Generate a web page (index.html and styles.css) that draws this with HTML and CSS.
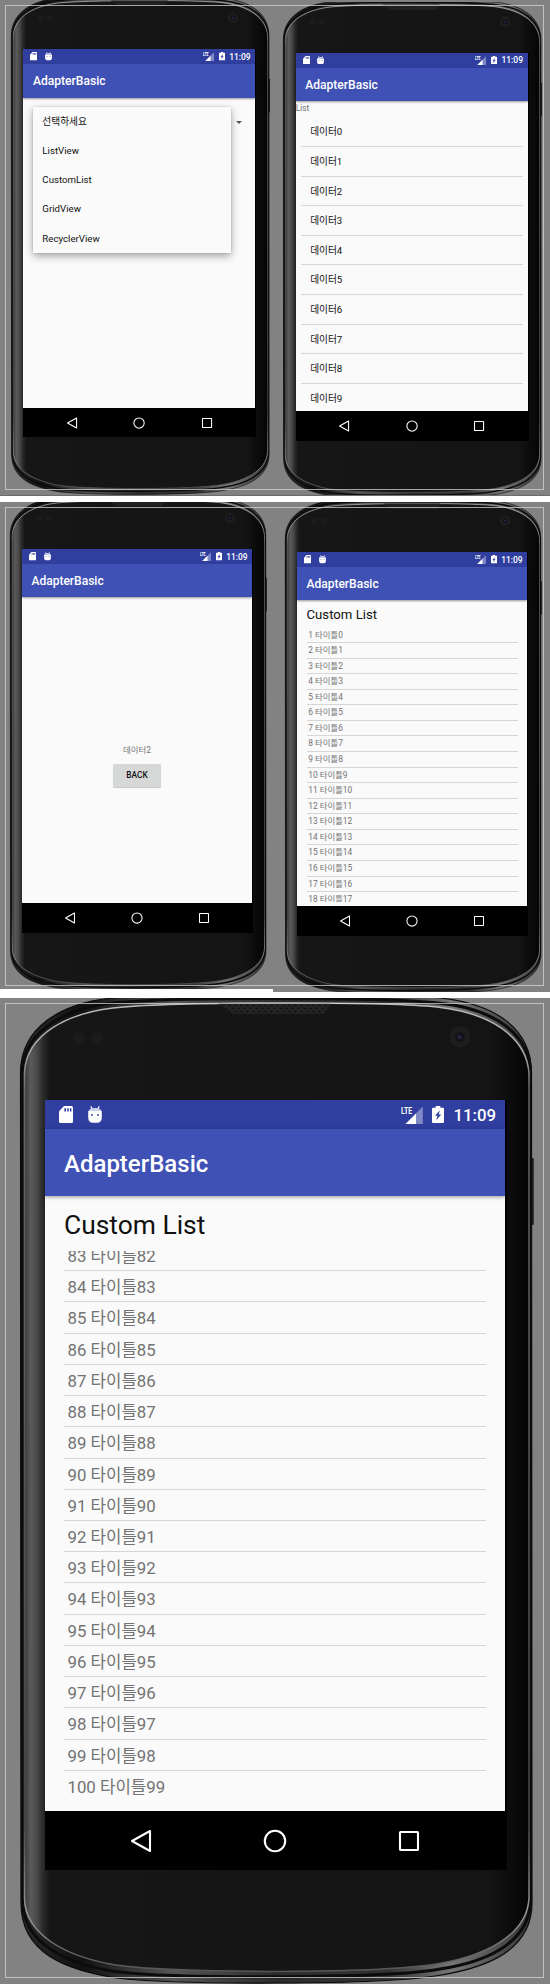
FILE: index.html
```html
<!DOCTYPE html>
<html lang="ko">
<head>
<meta charset="utf-8">
<title>AdapterBasic</title>
<link rel="stylesheet" href="styles.css">
</head>
<body>
<svg class="defs" width="0" height="0" aria-hidden="true">
  <defs>
    <linearGradient id="face" x1="0" x2="1" y1="0" y2="0">
      <stop offset="0" stop-color="#3a3a3a"/><stop offset=".012" stop-color="#5a5a5a"/><stop offset=".025" stop-color="#484848"/>
      <stop offset=".036" stop-color="#2c2c2c"/><stop offset=".05" stop-color="#161616"/><stop offset=".92" stop-color="#141414"/>
      <stop offset=".96" stop-color="#0c0c0c"/><stop offset="1" stop-color="#050505"/>
    </linearGradient>
    <linearGradient id="rim" x1="0" x2="1" y1="0" y2="0">
      <stop offset="0" stop-color="#2a2a2a"/><stop offset=".12" stop-color="#111"/><stop offset=".3" stop-color="#555"/>
      <stop offset=".5" stop-color="#2c2c2e"/><stop offset=".72" stop-color="#333"/><stop offset=".84" stop-color="#777"/><stop offset="1" stop-color="#333"/>
    </linearGradient>
    <linearGradient id="edge" x1="0" x2="0" y1="0" y2="1">
      <stop offset="0" stop-color="#bbb"/><stop offset=".05" stop-color="#aaa"/><stop offset=".09" stop-color="#666"/><stop offset=".85" stop-color="#48484c"/>
      <stop offset=".94" stop-color="#999"/><stop offset="1" stop-color="#555"/>
    </linearGradient>
    <pattern id="mesh" width="6" height="6" patternUnits="userSpaceOnUse">
      <rect width="6" height="6" fill="#242424"/><circle cx="1.5" cy="1.5" r="1.1" fill="#101010"/><circle cx="4.5" cy="4.5" r="1.1" fill="#101010"/>
    </pattern>
    <symbol id="device" viewBox="0 0 550 986">
      <rect x="531" y="160" width="2.800" height="67" rx="1" fill="#222"/>
      <path d="M20.500 75C20.500 30 60 5 113 0C170-6 380-6 440 0C495 6 531.500 30 531.500 75L532 905C532 958 475 972 435 978C380 987 175 987 117 980C65 972 21 955 21 905Z" fill="url(#rim)" stroke="#0b0b0b" stroke-width="1.200"/>
      <path d="M22 75C23 33 66 10 113 5C170-1 380-1 438 5C492 10 530 35 530.500 75V902C530 948 480 965 440 971C385 981 165 981 112 973C65 965 22.500 945 22.500 902Z" fill="none" stroke="#0c0c0c" stroke-width="3"/>
      <path d="M24.500 75C26 35 70 15 113 10C170 4 380 3 437 9C490 15 526 38 529 75V900C527 940 480 958 442 965C385 976 165 976 110 966C68 958 25 938 24.500 900Z" fill="url(#face)" stroke="url(#edge)" stroke-width="1.500"/>
      <path d="M217 5H331L325 16H233Z" fill="url(#mesh)"/>
      <circle cx="79" cy="40" r="6.500" fill="#1b1b1b"/><circle cx="97" cy="40" r="6.500" fill="#1b1b1b"/>
      <circle cx="460" cy="39" r="10.500" fill="#1d1d1e"/><circle cx="460" cy="39" r="5" fill="#131318"/><circle cx="459.500" cy="39" r="2" fill="#25254c"/>
    </symbol>
    <symbol id="sd" viewBox="0 0 14 17">
      <path d="M5 0H12.500Q14 0 14 1.500V15.500Q14 17 12.500 17H1.500Q0 17 0 15.500V5.300Z" fill="#fff"/>
      <path d="M5.400 2.200H7V5.500H5.400ZM8.200 2.200H9.700V5.500H8.200ZM10.900 2.200H12.400V5.500H10.900Z" fill="#303f9f"/>
    </symbol>
    <symbol id="droid" viewBox="0 0 14 17">
      <path d="M2.800.3 4.200 3M11.200.3 9.800 3" stroke="#fff" stroke-width="1.200" fill="none"/>
      <path d="M.5 5Q2 2 4.500 2H9.500Q12 2 13.500 5Z" fill="#c8cdee"/>
      <path d="M.2 5H13.800V11Q13.800 16.800 9 16.800H5Q.2 16.800 .2 11Z" fill="#fff"/>
      <circle cx="4" cy="9" r=".9" fill="#303f9f"/><circle cx="10" cy="9" r=".9" fill="#303f9f"/>
    </symbol>
    <symbol id="battery" viewBox="0 0 12 17">
      <path d="M3.700 0H8.300V1.700H11Q12 1.700 12 2.700V16Q12 17 11 17H1Q0 17 0 16V2.700Q0 1.700 1 1.700H3.700Z" fill="#fff"/>
      <path d="M7.800 4.200 3 9.800H5.500L4.200 14.300 9.200 8.500H6.800Z" fill="#303f9f"/>
    </symbol>
    <symbol id="signal" viewBox="0 0 22 18">
      <path d="M4.500 18 21.800 .5V18Z" fill="#7f89c6"/><path d="M4.500 18 15 7.500V18Z" fill="#fff"/>
      <path d="M0 0H12V8.500H0Z" fill="#303f9f"/>
      <text x="0" y="8" class="lte" textLength="11" lengthAdjust="spacingAndGlyphs">LTE</text>
    </symbol>
    <symbol id="back" viewBox="0 0 24 24"><path d="M21 2V22L3 12Z" fill="none" stroke="#fff" stroke-width="2.100" stroke-linejoin="round"/></symbol>
    <symbol id="home" viewBox="0 0 24 24"><circle cx="12" cy="12" r="10.200" fill="none" stroke="#fff" stroke-width="2.100"/></symbol>
    <symbol id="recent" viewBox="0 0 24 24"><rect x="3" y="3" width="18" height="18" rx=".5" fill="none" stroke="#fff" stroke-width="2.100"/></symbol>
  </defs>
</svg>

<main class="board">
  <section class="row row-a">
    <article class="phone p1">
      <svg class="device"><use href="#device"/></svg>
      <div class="screen">
        <div class="status"><svg class="sd"><use href="#sd"/></svg><svg class="droid"><use href="#droid"/></svg><svg class="signal"><use href="#signal"/></svg><svg class="battery"><use href="#battery"/></svg><span class="time">11:09</span></div>
        <header class="appbar">AdapterBasic</header>
        <div class="content spinner">
          <ul class="popup"><li>선택하세요</li><li>ListView</li><li>CustomList</li><li>GridView</li><li>RecyclerView</li></ul>
          <i class="arrow"></i>
        </div>
        <nav class="nav"><svg><use href="#back"/></svg><svg><use href="#home"/></svg><svg><use href="#recent"/></svg></nav>
      </div>
    </article>
    <article class="phone p2">
      <svg class="device"><use href="#device"/></svg>
      <div class="screen">
        <div class="status"><svg class="sd"><use href="#sd"/></svg><svg class="droid"><use href="#droid"/></svg><svg class="signal"><use href="#signal"/></svg><svg class="battery"><use href="#battery"/></svg><span class="time">11:09</span></div>
        <header class="appbar">AdapterBasic</header>
        <div class="content">
          <div class="caption">List</div>
          <ul class="data"><li>데이터0</li><li>데이터1</li><li>데이터2</li><li>데이터3</li><li>데이터4</li><li>데이터5</li><li>데이터6</li><li>데이터7</li><li>데이터8</li><li>데이터9</li></ul>
        </div>
        <nav class="nav"><svg><use href="#back"/></svg><svg><use href="#home"/></svg><svg><use href="#recent"/></svg></nav>
      </div>
    </article>
    <div class="frame"></div>
  </section>

  <section class="row row-b">
    <article class="phone p3">
      <svg class="device"><use href="#device"/></svg>
      <div class="screen">
        <div class="status"><svg class="sd"><use href="#sd"/></svg><svg class="droid"><use href="#droid"/></svg><svg class="signal"><use href="#signal"/></svg><svg class="battery"><use href="#battery"/></svg><span class="time">11:09</span></div>
        <header class="appbar">AdapterBasic</header>
        <div class="content detail">
          <div class="value">데이터2</div>
          <button class="btn">BACK</button>
        </div>
        <nav class="nav"><svg><use href="#back"/></svg><svg><use href="#home"/></svg><svg><use href="#recent"/></svg></nav>
      </div>
    </article>
    <article class="phone p4">
      <svg class="device"><use href="#device"/></svg>
      <div class="screen">
        <div class="status"><svg class="sd"><use href="#sd"/></svg><svg class="droid"><use href="#droid"/></svg><svg class="signal"><use href="#signal"/></svg><svg class="battery"><use href="#battery"/></svg><span class="time">11:09</span></div>
        <header class="appbar">AdapterBasic</header>
        <div class="content custom">
          <h2>Custom List</h2>
          <ul class="titles"><li>1 타이틀0</li><li>2 타이틀1</li><li>3 타이틀2</li><li>4 타이틀3</li><li>5 타이틀4</li><li>6 타이틀5</li><li>7 타이틀6</li><li>8 타이틀7</li><li>9 타이틀8</li><li>10 타이틀9</li><li>11 타이틀10</li><li>12 타이틀11</li><li>13 타이틀12</li><li>14 타이틀13</li><li>15 타이틀14</li><li>16 타이틀15</li><li>17 타이틀16</li><li>18 타이틀17</li></ul>
        </div>
        <nav class="nav"><svg><use href="#back"/></svg><svg><use href="#home"/></svg><svg><use href="#recent"/></svg></nav>
      </div>
    </article>
    <div class="frame"></div>
  </section>

  <section class="row row-c">
    <article class="phone p5">
      <svg class="device"><use href="#device"/></svg>
      <div class="screen">
        <div class="status"><svg class="sd"><use href="#sd"/></svg><svg class="droid"><use href="#droid"/></svg><svg class="signal"><use href="#signal"/></svg><svg class="battery"><use href="#battery"/></svg><span class="time">11:09</span></div>
        <header class="appbar">AdapterBasic</header>
        <div class="content custom">
          <h2>Custom List</h2>
          <ul class="titles scrolled"><li>83 타이틀82</li><li>84 타이틀83</li><li>85 타이틀84</li><li>86 타이틀85</li><li>87 타이틀86</li><li>88 타이틀87</li><li>89 타이틀88</li><li>90 타이틀89</li><li>91 타이틀90</li><li>92 타이틀91</li><li>93 타이틀92</li><li>94 타이틀93</li><li>95 타이틀94</li><li>96 타이틀95</li><li>97 타이틀96</li><li>98 타이틀97</li><li>99 타이틀98</li><li>100 타이틀99</li></ul>
        </div>
        <nav class="nav"><svg><use href="#back"/></svg><svg><use href="#home"/></svg><svg><use href="#recent"/></svg></nav>
      </div>
    </article>
    <div class="frame"></div>
  </section>
</main>
</body>
</html>
```
FILE: styles.css
```css
* { box-sizing: border-box; }
body { margin: 0; background: #fff; font-family: Roboto, "Noto Sans CJK KR", sans-serif; }
ul { list-style: none; margin: 0; padding: 0; }
.defs { display: block; position: absolute; }
.board { width: 550px; height: 1984px; display: flex; flex-direction: column; }

.row { position: relative; display: grid; grid-template-columns: 273px 277px; align-items: start; overflow: hidden; background: #828282; flex: none; }
.row-a { height: 496px; margin-bottom: 6px; border-bottom: 1px solid #6c6c6c; }
.row-b { height: 490px; margin-bottom: 6px; clip-path: polygon(0 0, 100% 0, 100% 100%, 273px 100%, 273px 487px, 0 487px); }
.row-c { height: 986px; grid-template-columns: 550px; }
.frame { position: absolute; left: 5px; top: 5px; width: 539px; height: 485px; border: 1px solid rgba(215, 215, 215, .75); }
.row-b .frame { height: 479px; }
.row-c .frame { height: 975px; }

/* --u is one unit of the full-size handset */
.phone { --u: .504px; position: relative; width: calc(550 * var(--u)); padding: calc(102 * var(--u)) 0 0 calc(45 * var(--u)); height: calc(986 * var(--u)); }
.device { position: absolute; left: 0; top: 0; width: 100%; height: 100%; overflow: visible; }
.p1 { margin: -2px 0 0 .7px; }
.p2 { margin: 1.500px 0 0 0; }
.p3 { --u: .5px; margin: -4px 0 0 -.5px; }
.p4 { --u: .5px; margin: -1px 0 0 1.500px; }
.p5 { --u: 1px; }

.screen { position: relative; width: calc(462 * var(--u)); height: calc(770 * var(--u)); display: flex; flex-direction: column; background: #000; }
.row-b .screen { height: calc(767 * var(--u)); }
.status { width: calc(460 * var(--u)); height: calc(29 * var(--u)); background: #303f9f; display: flex; align-items: center; padding: 0 calc(9 * var(--u)) 0 calc(14 * var(--u)); flex: none; }
.status svg { height: calc(17 * var(--u)); flex: none; }
.sd, .droid { width: calc(14 * var(--u)); }
.droid { margin-left: calc(15 * var(--u)); }
.status .signal { width: calc(22 * var(--u)); height: calc(18 * var(--u)); margin-left: auto; }
.battery { width: calc(12 * var(--u)); margin: 0 calc(9 * var(--u)); }
.lte { font: 700 9px Roboto, sans-serif; fill: #fff; }
.time { color: #fff; font-size: calc(16.800 * var(--u)); font-weight: 500; line-height: 1; white-space: nowrap; padding-top: calc(2 * var(--u)); }
.appbar { position: relative; z-index: 1; width: calc(460 * var(--u)); height: calc(67 * var(--u)); background: #3f51b5; color: #fff; font-size: calc(24 * var(--u)); font-weight: 500; line-height: calc(71 * var(--u)); padding-left: calc(19 * var(--u)); box-shadow: 0 1px calc(4 * var(--u)) rgba(0, 0, 0, .4); flex: none; }
.content { width: calc(460 * var(--u)); flex: 1; min-height: 0; background: #fafafa; overflow: hidden; }
.nav { height: calc(59 * var(--u)); padding-right: calc(2 * var(--u)); display: flex; align-items: center; justify-content: center; gap: calc(110 * var(--u)); flex: none; }
.nav svg { width: calc(24 * var(--u)); height: calc(24 * var(--u)); }

.spinner { display: flex; align-items: flex-start; padding: 9px 0 0 9.500px; }
.popup { width: 198px; background: #fafafa; box-shadow: 0 3px 8px rgba(0, 0, 0, .35), 0 0 2px rgba(0, 0, 0, .15); }
.popup li { height: 29.200px; line-height: 30.400px; padding-left: 9.500px; font-size: 9.680px; color: #111; }
.arrow { margin: 14px 0 0 5px; border: 3px solid transparent; border-top-color: #555; border-bottom: 0; }

.caption { height: 16px; line-height: 14px; font-size: 8.400px; color: #737373; }
.data { margin: 0 5px; }
.data li { height: 29.650px; line-height: 29.600px; padding-left: 9.500px; font-size: 9.680px; color: #111; border-bottom: 1px solid #d8d8d8; }

.detail { display: flex; flex-direction: column; align-items: center; padding-top: 147px; }
.value { font-size: 8.400px; line-height: 12px; color: #737373; }
.btn { margin-top: 8px; width: 48px; height: 23px; padding: 0; border: 0; border-radius: 1px; background: #d6d7d7; box-shadow: 0 1px 1px rgba(0, 0, 0, .2); font: 500 8.400px/23px Roboto, sans-serif; color: #111; }

.custom { padding: 0 calc(19 * var(--u)) calc(9 * var(--u)); display: flex; flex-direction: column; }
.custom h2 { margin: 0; height: calc(55 * var(--u)); line-height: calc(58 * var(--u)); font-size: calc(26.400 * var(--u)); font-weight: 400; color: #111; flex: none; }
.titles { flex: 1; min-height: 0; overflow: hidden; }
.titles li { height: calc(31.150 * var(--u)); line-height: calc(31 * var(--u)); padding-left: calc(3.500 * var(--u)); font-size: calc(16.800 * var(--u)); color: #737373; border-bottom: 1px solid #d6d6d6; white-space: nowrap; }
.titles.scrolled li { height: 31.230px; line-height: 32.500px; }
.scrolled li:first-child { margin-top: calc(-11 * var(--u)); }
.titles li:last-child { border-bottom: 0; }
```
